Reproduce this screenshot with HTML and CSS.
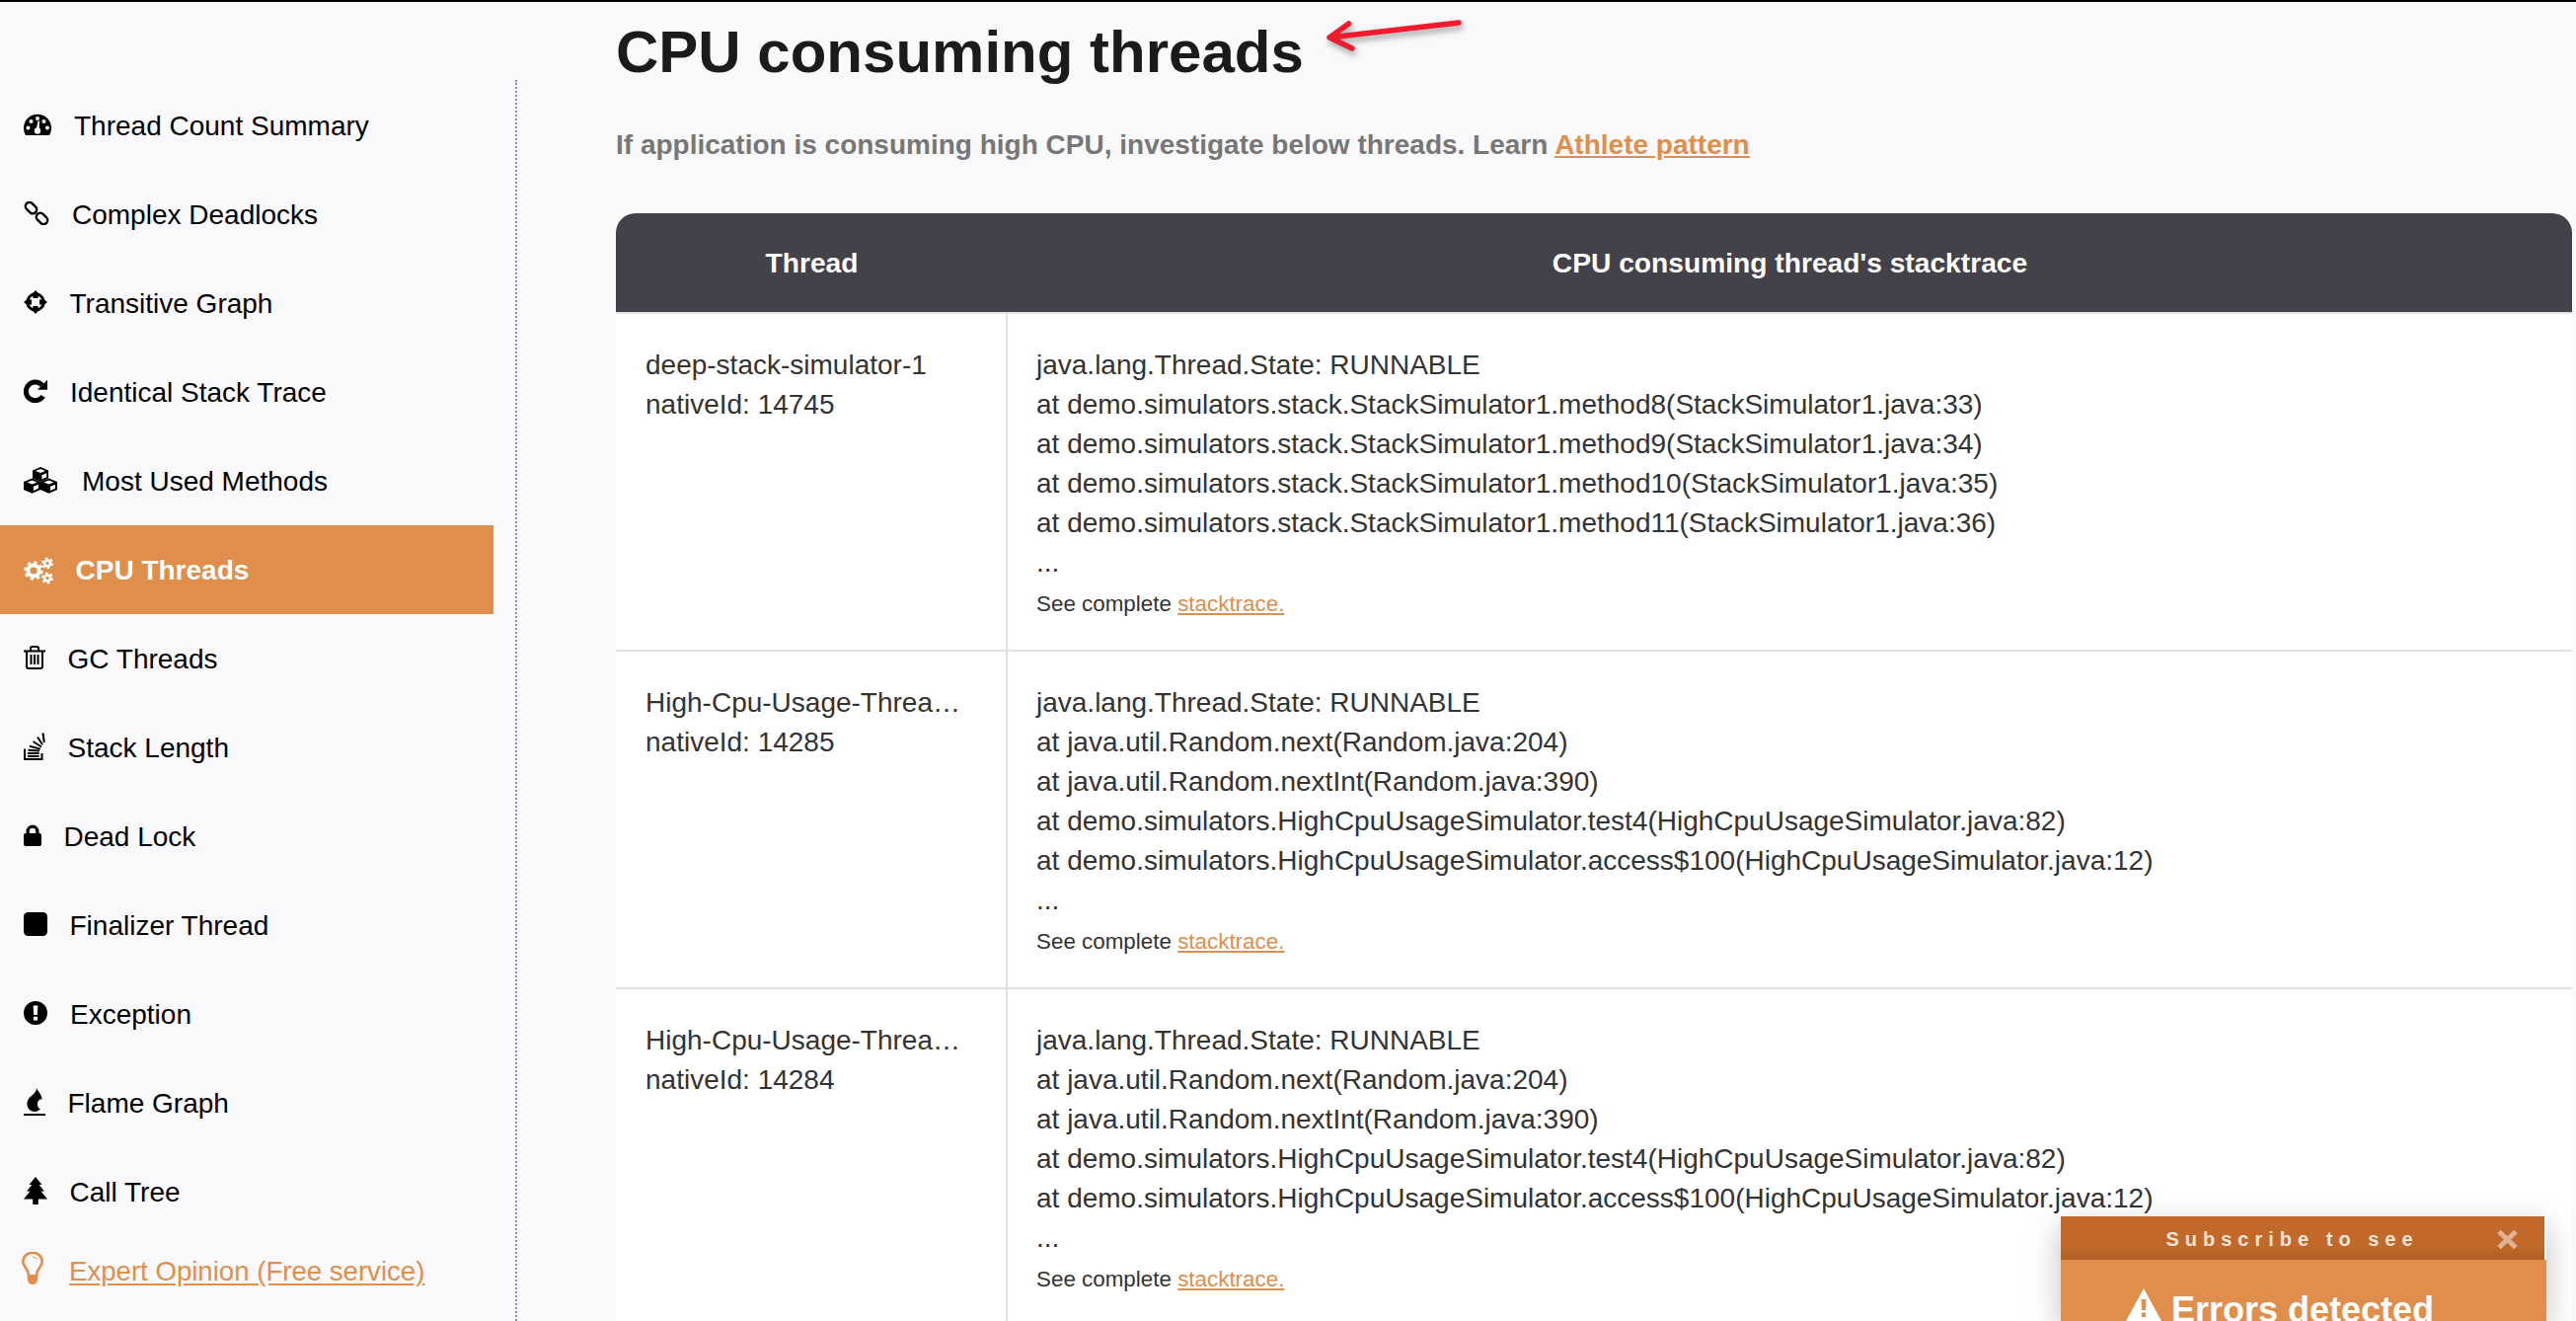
FILE: index.html
```html
<!DOCTYPE html>
<html lang="en">
<head>
<meta charset="utf-8">
<title>CPU consuming threads</title>
<link rel="stylesheet" href="styles.css">
</head>
<body>
<div class="page">
  <aside class="sidebar">
    <nav class="menu">
      <a class="item"><svg class="ic ic-gauge" viewBox="0 0 28 22"><path d="M2 22A14 14 0 1 1 26 22Z"/><g class="hole"><circle cx="4.5" cy="14.5" r="2"/><circle cx="7.5" cy="8" r="2"/><circle cx="14" cy="5" r="2"/><circle cx="20.5" cy="8" r="2"/><circle cx="24" cy="14.5" r="2"/><circle cx="14" cy="17.5" r="3.2"/><path d="M12.6 16.5L14.5 7.5H16L15.6 17.5Z"/></g></svg><span>Thread Count Summary</span></a>
      <a class="item"><svg class="ic ic-link" viewBox="0 0 26 24"><g class="line link-line"><rect x="-6.4" y="-4" width="12.8" height="8" rx="4" transform="translate(7.500 6.600) rotate(45)"/><rect x="-6.4" y="-4" width="12.8" height="8" rx="4" transform="translate(18.500 17.400) rotate(45)"/></g></svg><span>Complex Deadlocks</span></a>
      <a class="item"><svg class="ic ic-cross" viewBox="0 0 24 24"><g class="line"><circle cx="12" cy="12" r="8.2"/></g><path d="M12 0L14.6 3V8H9.4V3ZM12 24L9.4 21V16H14.6V21ZM0 12L3 9.4H8V14.6H3ZM24 12L21 14.6H16V9.4H21Z"/></svg><span>Transitive Graph</span></a>
      <a class="item"><svg class="ic ic-redo" viewBox="0 0 24 24"><path class="thick" d="M19.6 17.2A9.3 9.3 0 1 1 18.6 6.2"/><path d="M24 0.8V10.8H14Z"/></svg><span>Identical Stack Trace</span></a>
      <a class="item"><svg class="ic ic-cubes" viewBox="0 0 34 27"><g transform="translate(17 7.5)"><path d="M0-7.5L8-4V4L0 7.5L-8 4V-4Z"/><path class="hole" d="M0-5.4L5-3.4L0-1.4L-5-3.4ZM1.4 .8L6.2-1.2V2.8L1.4 5Z"/></g><g transform="translate(8.5 19)"><path d="M0-7.5L8.5-4V4L0 7.8L-8.5 4V-4Z"/><path class="hole" d="M0-5.4L5-3.4L0-1.4L-5-3.4ZM1.4 .8L6.4-1.2V2.8L1.4 5Z"/></g><g transform="translate(25.5 19)"><path d="M0-7.5L8.5-4V4L0 7.8L-8.5 4V-4Z"/><path class="hole" d="M0-5.4L5-3.4L0-1.4L-5-3.4ZM1.4 .8L6.4-1.2V2.8L1.4 5Z"/></g></svg><span>Most Used Methods</span></a>
      <a class="item active"><svg class="ic ic-cogs" viewBox="0 0 30 28"><g class="gear"><circle class="ring" cx="10" cy="14" r="5.6"/><circle class="teeth big" cx="10" cy="14" r="8.4"/><circle class="ring small" cx="24" cy="6.5" r="3"/><circle class="teeth tiny" cx="24" cy="6.5" r="5"/><circle class="ring small" cx="24" cy="21.5" r="3"/><circle class="teeth tiny" cx="24" cy="21.5" r="5"/></g></svg><span>CPU Threads</span></a>
      <a class="item"><svg class="ic ic-trash" viewBox="0 0 22 24"><g class="thin"><path d="M0 5.5H22M7 5.5V2.7Q7 1 8.7 1H13.3Q15 1 15 2.7V5.5"/><path d="M3 5.5V21Q3 23 5 23H17Q19 23 19 21V5.5"/><path d="M7.5 9V19M11 9V19M14.5 9V19"/></g></svg><span>GC Threads</span></a>
      <a class="item"><svg class="ic ic-stack" viewBox="0 0 22 28"><g class="thin"><path d="M1 16.5V27H18.5V21"/><path d="M4 24H15.5M4 21H15.5M4.5 17.8L16 18.6M6 13.8L16.8 16.6M9.5 9L18 14.5M14 4.5L19 12.2M19.5 0.5L20.8 10"/></g></svg><span>Stack Length</span></a>
      <a class="item"><svg class="ic ic-lock" viewBox="0 0 18 22"><path d="M0 11Q0 9 2 9H2.5V7A6.5 6.5 0 0 1 15.5 7V9H16Q18 9 18 11V20Q18 22 16 22H2Q0 22 0 20ZM5.8 9H12.2V7A3.2 3.2 0 0 0 5.8 7Z" fill-rule="evenodd"/></svg><span>Dead Lock</span></a>
      <a class="item"><svg class="ic ic-square" viewBox="0 0 24 24"><rect width="24" height="24" rx="4.5"/></svg><span>Finalizer Thread</span></a>
      <a class="item"><svg class="ic ic-alert" viewBox="0 0 24 24"><circle cx="12" cy="12" r="12"/><path class="hole" d="M9.6 4.5H14.4L13.8 14H10.2ZM9.9 15.8H14.1V19.6H9.9Z"/></svg><span>Exception</span></a>
      <a class="item"><svg class="ic ic-fire" viewBox="0 0 22 28"><path d="M13 0C14 3 19 7 18.500 12C18 10 15 12 14 15C13.500 18 15 21 17 21C15.500 23 13 24 11 24C6.500 24 3 20 3.500 15C4 8 13 7 13 0Z"/><rect y="26" width="22" height="2"/></svg><span>Flame Graph</span></a>
      <a class="item"><svg class="ic ic-tree" viewBox="0 0 24 28"><path d="M12 0L18.500 8H15.500L21 14.500H17.500L24 22.500H14.800V28H9.200V22.500H0L6.500 14.500H3L8.500 8H5.500Z"/></svg><span>Call Tree</span></a>
      <a class="item expert"><svg class="ic ic-bulb" viewBox="0 0 22 33"><path class="bulb" d="M7 23.500C7 17 1.300 15.500 1.300 10A9.700 9.200 0 0 1 20.700 10C20.700 15.500 15 17 15 23.500"/><path class="bulb glint" d="M11 5Q15 5 16 8"/><path class="bulbfill" d="M5.800 23H16.200V28Q15.500 33 11 33Q6.500 33 5.800 28Z"/></svg><span class="expert-link">Expert Opinion (Free service)</span></a>
    </nav>
  </aside>
  <main class="content">
    <h1 class="title">CPU consuming threads</h1>
    <svg class="arrow" viewBox="0 0 146 42"><path d="M138 7L7 22M26.500 8L7 22L30 33"/></svg>
    <p class="lead">If application is consuming high CPU, investigate below threads. Learn <a class="link">Athlete pattern</a></p>
    <div class="table">
      <div class="head"><div>Thread</div><div>CPU consuming thread's stacktrace</div></div>
      <div class="row">
        <div class="cell name">deep-stack-simulator-1<br>nativeId: 14745</div>
        <div class="cell trace">java.lang.Thread.State: RUNNABLE<br>at demo.simulators.stack.StackSimulator1.method8(StackSimulator1.java:33)<br>at demo.simulators.stack.StackSimulator1.method9(StackSimulator1.java:34)<br>at demo.simulators.stack.StackSimulator1.method10(StackSimulator1.java:35)<br>at demo.simulators.stack.StackSimulator1.method11(StackSimulator1.java:36)<br>...<div class="more">See complete <a class="link">stacktrace.</a></div></div>
      </div>
      <div class="row">
        <div class="cell name">High-Cpu-Usage-Threa…<br>nativeId: 14285</div>
        <div class="cell trace">java.lang.Thread.State: RUNNABLE<br>at java.util.Random.next(Random.java:204)<br>at java.util.Random.nextInt(Random.java:390)<br>at demo.simulators.HighCpuUsageSimulator.test4(HighCpuUsageSimulator.java:82)<br>at demo.simulators.HighCpuUsageSimulator.access$100(HighCpuUsageSimulator.java:12)<br>...<div class="more">See complete <a class="link">stacktrace.</a></div></div>
      </div>
      <div class="row">
        <div class="cell name">High-Cpu-Usage-Threa…<br>nativeId: 14284</div>
        <div class="cell trace">java.lang.Thread.State: RUNNABLE<br>at java.util.Random.next(Random.java:204)<br>at java.util.Random.nextInt(Random.java:390)<br>at demo.simulators.HighCpuUsageSimulator.test4(HighCpuUsageSimulator.java:82)<br>at demo.simulators.HighCpuUsageSimulator.access$100(HighCpuUsageSimulator.java:12)<br>...<div class="more">See complete <a class="link">stacktrace.</a></div></div>
      </div>
    </div>
  </main>
</div>
<aside class="popup">
  <div class="popup-head"><span class="popup-label">Subscribe to see</span><svg class="popup-close" viewBox="0 0 21 19"><path d="M2 1.500L19 17.500M19 1.500L2 17.500"/></svg></div>
  <div class="popup-body"><svg class="warn" viewBox="0 0 36 33"><path d="M18 0L36 33H0Z"/><path class="warnbang" d="M15.500 11H20.500L20 22H16ZM16 24.500H20V29H16Z"/></svg><span>Errors detected</span></div>
</aside>
</body>
</html>
```

FILE: styles.css
```css
* { box-sizing: border-box; }
html, body { margin: 0; height: 100%; }
body {
  border-top: 2px solid #000;
  background: #f9f9fb;
  color: #333;
  font-family: "Liberation Sans", Arial, sans-serif;
  overflow: hidden;
}
a { color: inherit; }
.page { display: flex; height: 100%; }

.sidebar {
  flex: 0 0 524px;
  margin-top: 79px;
  border-right: 2px dotted #8f8f95;
  color: #000;
}
.menu { display: flex; flex-direction: column; width: 500px; padding-top: 1px; }
.item {
  display: flex;
  align-items: center;
  height: 90px;
  padding: 1px 0 0 24px;
  font-size: 28px;
}
.item.active { padding-top: 2px; background: #e08e4b; color: #fff; font-weight: 700; }
.item.expert { height: 72px; padding: 0 0 0 22px; color: #e08e4b; font-size: 27.6px; }
.expert-link { text-decoration: underline; text-underline-offset: 3px; }

.ic { flex: none; fill: #000; display: block; margin-bottom: 3px; }
.active .ic { fill: #fff; margin-bottom: 0; }
.ic .hole { fill: #f9f9fb; }
.ic .line, .ic .thin { fill: none; stroke: #000; }
.ic .line { stroke-width: 3; }
.ic .link-line { stroke-width: 2.4; }
.ic .thin { stroke-width: 2; }
.ic .thick { fill: none; stroke: #000; stroke-width: 5; }
.ic-gauge { width: 28px; height: 22px; margin-right: 23px; }
.ic-link { width: 26px; height: 24px; margin-right: 23px; }
.ic-cross { width: 24px; height: 24px; margin-right: 22.500px; }
.ic-redo { width: 24px; height: 24px; margin-right: 23px; }
.ic-cubes { width: 34px; height: 27px; margin-right: 25px; }
.ic-cogs { width: 30px; height: 28px; margin-right: 22.500px; }
.ic-trash { width: 22px; height: 24px; margin-right: 22.500px; }
.ic-stack { width: 22px; height: 28px; margin-right: 22.500px; }
.ic-lock { width: 18px; height: 22px; margin-right: 22.500px; }
.ic-square { width: 24px; height: 24px; margin-right: 22.500px; }
.ic-alert { width: 24px; height: 24px; margin-right: 23px; }
.ic-fire { width: 22px; height: 28px; margin-right: 22.500px; }
.ic-tree { width: 24px; height: 28px; margin-right: 22.500px; }
.ic-bulb { width: 22px; height: 33px; margin-right: 26px; margin-bottom: 7px; }
.gear .ring { fill: none; stroke: #fff; stroke-width: 4; }
.gear .ring.small { stroke-width: 2.6; }
.gear .teeth { fill: none; stroke: #fff; stroke-width: 2.6; }
.gear .teeth.big { stroke-dasharray: 3.3 3.3; }
.gear .teeth.tiny { stroke-width: 2; stroke-dasharray: 2.6 2.6; }
.bulb { fill: none; stroke: #e08e4b; stroke-width: 2.6; }
.glint { stroke-width: 1; }
.bulbfill { fill: #e08e4b; }

.content { position: relative; flex: 1; min-width: 0; padding-left: 100px; padding-right: 4px; }
.title {
  margin: 0;
  padding-top: 22px;
  font-size: 60px;
  line-height: 58px;
  font-weight: 700;
  color: #1b1b1b;
}
.arrow {
  position: absolute;
  left: 816px;
  top: 14px;
  width: 146px;
  height: 42px;
  fill: none;
  stroke: #ee1c2e;
  stroke-width: 5.500;
  stroke-linecap: round;
  stroke-linejoin: round;
  filter: drop-shadow(2px 4px 3px rgba(0, 0, 0, .35));
}
.lead {
  margin: 45px 0 0;
  font-size: 28px;
  line-height: 40px;
  font-weight: 700;
  color: #777;
}
.link { color: #e08e4b; text-decoration: underline; }
.table { margin-top: 49px; background: #fff; }
.head {
  display: grid;
  grid-template-columns: 397px 1fr;
  height: 100px;
  padding-top: 1px;
  align-items: center;
  text-align: center;
  border-radius: 20px 20px 0 0;
  background: #434149;
  color: #fff;
  font-size: 28.200px;
  font-weight: 700;
}
.row {
  display: grid;
  grid-template-columns: 397px 1fr;
  border-top: 2px solid #e2e2e2;
  font-size: 28px;
  line-height: 40px;
  color: #333;
}
.cell { padding: 32px 29px 26px 30px; }
.name { border-right: 2px solid #e2e2e2; white-space: nowrap; overflow: hidden; }
.trace { white-space: nowrap; padding-left: 29px; }
.more { margin-top: 2px; font-size: 22.400px; }

.popup {
  position: fixed;
  left: 2088px;
  top: 1232px;
  width: 492px;
  height: 106px;
  box-shadow: 0 10px 30px rgba(0, 0, 0, .25);
}
.popup-head {
  display: flex;
  align-items: center;
  justify-content: center;
  position: relative;
  width: 490px;
  height: 44px;
  padding: 3px 21px 0 0;
  background: linear-gradient(#c1682a 70%, #af5f25);
  color: #f6e4d6;
  font-size: 20px;
  font-weight: 700;
  letter-spacing: 6px;
}
.popup-close {
  position: absolute;
  right: 27px;
  top: 14px;
  width: 21px;
  height: 19px;
  fill: none;
  stroke: #e2b295;
  stroke-width: 5;
}
.popup-body {
  display: flex;
  align-items: flex-start;
  gap: 10px;
  height: 62px;
  padding: 29px 0 0 66px;
  background: #e08e4b;
  color: #fff;
  font-size: 36px;
  line-height: 44px;
  font-weight: 700;
  overflow: hidden;
}
.warn { flex: none; width: 36px; height: 33px; fill: #fff; }
.warnbang { fill: #e08e4b; }
```
